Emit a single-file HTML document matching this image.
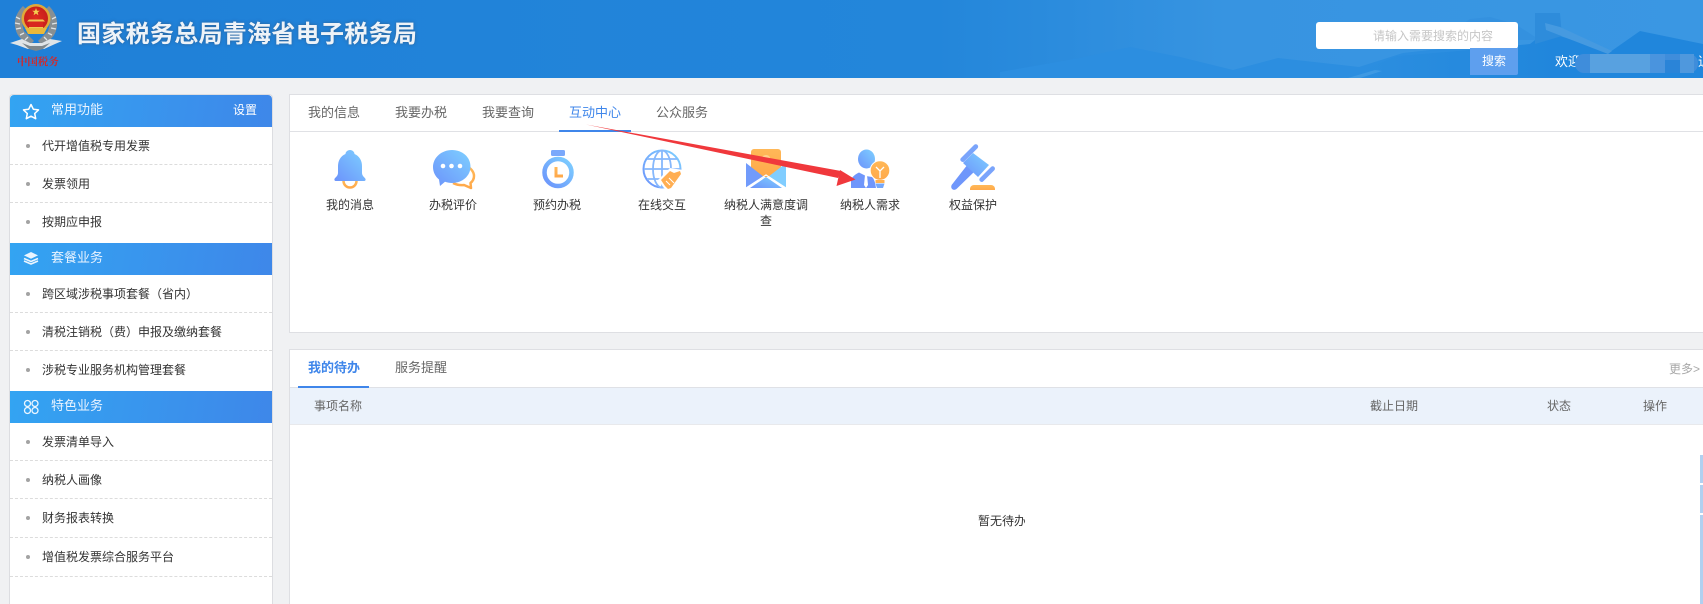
<!DOCTYPE html>
<html lang="zh-CN"><head><meta charset="utf-8"><title>国家税务总局青海省电子税务局</title>
<style>
*{box-sizing:border-box;margin:0;padding:0}
html,body{width:1703px;height:604px;overflow:hidden;background:#f0f1f3}
#root{position:relative;width:1703px;height:604px;overflow:hidden;background:#f0f1f3;font-family:"Liberation Sans","Noto Sans CJK SC",sans-serif;font-size:12px;color:#444;text-spacing-trim:space-all}
.a{position:absolute;white-space:nowrap}
#hd{position:absolute;left:0;top:0;width:1703px;height:78px;background:#1f80d8;overflow:hidden}
.t{line-height:18px;height:18px}
#side{position:absolute;left:9px;top:94px;width:264px;height:510px;background:#fff;border:1px solid #dcdde1;border-bottom:0;border-radius:4px 4px 0 0}
.sh{position:absolute;left:10px;width:262px;height:32px;background:linear-gradient(100deg,#33a4f2,#3e87e9);color:#eaf4ff;font-size:13px;line-height:30px;padding-left:41px}
.it{position:absolute;left:10px;width:262px;height:38px;line-height:38px;padding-left:32px;color:#333;border-bottom:1px dashed #dcdcdc}
.it:before{content:"";position:absolute;left:16px;top:17px;width:4px;height:4px;border-radius:50%;background:#a3a3a3}
.it.n{border-bottom:0}
.pn{position:absolute;left:289px;width:1414px;background:#fff;border:1px solid #dedfe3;border-right:0}
.tb{font-size:13px;color:#666;line-height:18px;height:18px}
.lb{width:90px;text-align:center;color:#333;line-height:16px;white-space:normal}
</style></head><body>
<div id="root">
<div id="hd">
<svg class="a" style="left:0;top:0" width="1703" height="78" viewBox="0 0 1703 78">
<defs><linearGradient id="h1" x1="0" x2="1703" y1="0" y2="0" gradientUnits="userSpaceOnUse"><stop offset="0" stop-color="#1f80d8"/><stop offset=".55" stop-color="#2386da"/><stop offset=".72" stop-color="#3794e1"/><stop offset="1" stop-color="#3a97e3"/></linearGradient>
<linearGradient id="h2" x1="1340" x2="1560" y1="0" y2="0" gradientUnits="userSpaceOnUse"><stop offset="0" stop-color="#2d8fe0"/><stop offset="1" stop-color="#2086dc"/></linearGradient>
<radialGradient id="em" cx=".5" cy=".5" r=".5"><stop offset="0" stop-color="#e02a20"/><stop offset="1" stop-color="#c8201c"/></radialGradient></defs>
<rect width="1703" height="78" fill="url(#h1)"/>
<path d="M1440 40L1470 19 1490 17 1515 24 1540 40Z" fill="#3491df"/>
<path d="M1000 78V72L1080 58 1130 47 1180 57 1233 70 1278 58 1314 62 1359 67 1403 53 1448 48 1540 46V78Z" fill="#2c8ee0"/>
<path d="M1340 78L1397 56 1470 50 1530 44 1535 40 1560 36 1610 52 1640 31 1703 44V78Z" fill="url(#h2)"/>
<path d="M1535 13H1560L1562 36 1535 44Z" fill="#2e8cdb"/>
<path d="M1545 23L1560 27 1612 51 1608 54 1546 30Z" fill="#469ae0"/>
<path d="M1348 78L1375 70 1382 71 1360 78Z" fill="#3f9ae3"/>
<!-- emblem -->
<g>
<path d="M15 26C14 17 19 10 23 6L26 9C22 15 21 23 24 31L34 41 31 44C21 41 16 35 15 26Z" fill="#878f93"/>
<path d="M57 26C58 17 53 10 49 6L46 9C50 15 51 23 48 31L38 41 41 44C51 41 56 35 57 26Z" fill="#878f93"/>
<path d="M16 17l4 2M15 23l5 1M16 29l5-1M20 35l4-2M25 40l3-3M56 17l-4 2M57 23l-5 1M56 29l-5-1M52 35l-4-2M47 40l-3-3" stroke="#dfe4e7" stroke-width="1.300"/>
<circle cx="36" cy="18.500" r="14.500" fill="#dfa93a"/>
<circle cx="36" cy="18.500" r="12" fill="url(#em)"/>
<path d="M25 28H47L44 34H28Z" fill="#e8b83c"/><path d="M29 22H43V28H29Z" fill="#d8281f"/><path d="M27 21.500H45L43 19.500H29Z" fill="#f0c850"/><path d="M29 27.500h14" stroke="#f0c850" stroke-width="1"/>
<path d="M36 8l1 2.700h2.800l-2.200 1.700.8 2.800-2.400-1.700-2.400 1.700.8-2.800-2.200-1.700H35z" fill="#f4d050"/>
<path d="M10 43L22 39 30 43H42L50 39 62 41 55 44 44 49H28L17 45Z" fill="#dfe4e7"/>
<path d="M22 43L30 46H42L50 43 43 49 36 51 29 49Z" fill="#7e868a"/>
</g>
</svg>
<div class="a" style="left:17px;top:53px;width:42px;font:bold 10.500px/17px 'Noto Serif CJK SC',serif;color:#cf2a2e;letter-spacing:-.1px">中国税务</div>
<div class="a" style="left:77px;top:17px;font-size:24px;font-weight:700;line-height:36px;letter-spacing:.3px;color:#eef3f8;text-shadow:0 0 3px rgba(60,70,90,.55)">国家税务总局青海省电子税务局</div>
<div class="a" style="left:1316px;top:22px;width:202px;height:27px;background:#fff;border-radius:3px"></div>
<div class="a t" style="left:1373px;top:27px;color:#c6c6c6">请输入需要搜索的内容</div>
<div class="a" style="left:1470px;top:48px;width:48px;height:27px;background:#5e9fee;color:#fff;line-height:27px;text-align:center;border-radius:0 0 2px 0">搜索</div>
<div class="a t" style="left:1555px;top:53px;color:#fff;font-size:13px">欢迎</div>
<div class="a t" style="left:1698px;top:53px;color:#fff;font-size:13px">退</div>
<div class="a" style="left:1575px;top:54px;width:123px;height:19px;background:#3f8ddb;border-radius:9px"></div>
<div class="a" style="left:1590px;top:54px;width:60px;height:19px;background:#58a1e0"></div>
<div class="a" style="left:1650px;top:54px;width:15px;height:19px;background:#4a94de"></div>
<div class="a" style="left:1665px;top:60px;width:15px;height:13px;background:#2a84d8"></div>
<div class="a" style="left:1680px;top:54px;width:14px;height:19px;background:#4f98dd"></div>
</div>

<div id="side"></div>
<div class="sh" style="top:95px;border-radius:4px 4px 0 0">常用功能<span class="a" style="left:223px;top:0;font-size:12px;color:#fff">设置</span></div>
<div class="it" style="top:127px">代开增值税专用发票</div>
<div class="it" style="top:165px">发票领用</div>
<div class="it n" style="top:203px;height:40px">按期应申报</div>
<div class="sh" style="top:243px">套餐业务</div>
<div class="it" style="top:275px">跨区域涉税事项套餐（省内）</div>
<div class="it" style="top:313px">清税注销税（费）申报及缴纳套餐</div>
<div class="it n" style="top:351px;height:40px">涉税专业服务机构管理套餐</div>
<div class="sh" style="top:391px">特色业务</div>
<div class="it" style="top:423px">发票清单导入</div>
<div class="it" style="top:461px">纳税人画像</div>
<div class="it" style="top:499px;height:39px">财务报表转换</div>
<div class="it" style="top:538px;height:39px">增值税发票综合服务平台</div>

<div class="pn" style="top:94px;height:239px"></div>
<div class="a" style="left:290px;top:131px;width:1413px;height:1px;background:#e0e1e5"></div>
<div class="a tb" style="left:308px;top:104px">我的信息</div>
<div class="a tb" style="left:395px;top:104px">我要办税</div>
<div class="a tb" style="left:482px;top:104px">我要查询</div>
<div class="a tb" style="left:569px;top:104px;color:#3f86ea">互动中心</div>
<div class="a tb" style="left:656px;top:104px">公众服务</div>
<div class="a" style="left:559px;top:130px;width:72px;height:2px;background:#3f86ea"></div>

<div class="a lb" style="left:305px;top:197px">我的消息</div>
<div class="a lb" style="left:408px;top:197px">办税评价</div>
<div class="a lb" style="left:512px;top:197px">预约办税</div>
<div class="a lb" style="left:617px;top:197px">在线交互</div>
<div class="a lb" style="left:721px;top:197px;width:90px">纳税人满意度调查</div>
<div class="a lb" style="left:825px;top:197px">纳税人需求</div>
<div class="a lb" style="left:928px;top:197px">权益保护</div>

<div class="pn" style="top:349px;height:260px"></div>
<div class="a tb" style="left:308px;top:359px;color:#3f86ea;font-weight:700">我的待办</div>
<div class="a tb" style="left:395px;top:359px">服务提醒</div>
<div class="a t" style="left:1669px;top:360px;color:#a8a8a8">更多&gt;</div>
<div class="a" style="left:290px;top:387px;width:1413px;height:38px;background:#ebf2fb;border-top:1px solid #dfe1e6;border-bottom:1px solid #e8e9ec"></div>
<div class="a" style="left:298px;top:386px;width:71px;height:2px;background:#3f86ea"></div>
<div class="a t" style="left:314px;top:397px;color:#666">事项名称</div>
<div class="a t" style="left:1370px;top:397px;color:#666">截止日期</div>
<div class="a t" style="left:1547px;top:397px;color:#666">状态</div>
<div class="a t" style="left:1643px;top:397px;color:#666">操作</div>
<div class="a t" style="left:978px;top:512px;color:#333;width:47px;overflow:hidden">暂无待办</div>
<div class="a" style="left:1700px;top:455px;width:3px;height:28px;background:#b0d0f0"></div>
<div class="a" style="left:1700px;top:485px;width:3px;height:28px;background:#b0d0f0"></div>
<div class="a" style="left:1700px;top:515px;width:3px;height:89px;background:#b0d0f0"></div>

<svg class="a" style="left:0;top:0;pointer-events:none" width="1703" height="604" viewBox="0 0 1703 604">
<defs>
<linearGradient id="b" x1="0" y1="1" x2="1" y2="0"><stop offset="0" stop-color="#6c93fb"/><stop offset="1" stop-color="#7ed0ff"/></linearGradient>
<linearGradient id="o" x1="0" y1="0" x2="0" y2="1"><stop offset="0" stop-color="#ffb858"/><stop offset="1" stop-color="#ffa94a"/></linearGradient>
</defs>
<!-- sidebar icons -->
<path d="M31 104.500l2.300 4.700 5.200.7-3.800 3.600 1 5.200-4.700-2.500-4.700 2.500 1-5.200-3.800-3.600 5.200-.7z" fill="none" stroke="#fff" stroke-width="1.500" stroke-linejoin="round"/>
<path d="M31 252l7 3.400-7 3.400-7-3.400z" fill="#eaf5ff"/><path d="M24 258.500l7 3 7-3M24 261l7 3 7-3" fill="none" stroke="#eaf5ff" stroke-width="1.600"/>
<g fill="none" stroke="#eaf5ff" stroke-width="1.300"><circle cx="27.500" cy="403.500" r="3"/><circle cx="35" cy="403.500" r="3"/><circle cx="27.500" cy="410.500" r="3"/><circle cx="35" cy="410.500" r="3"/></g>
<!-- bell -->
<path d="M343.500 181a6.500 6.500 0 0 0 13 0" fill="none" stroke="url(#o)" stroke-width="2.500"/>
<path d="M350 150c2.500 0 4.500 2 4.500 4c5 2 7.500 7 7.500 12v7c0 3 3 4.500 3.500 6c.4 1.200-.3 2-1.500 2h-28c-1.200 0-1.900-.8-1.500-2c.5-1.500 3.500-3 3.500-6v-7c0-5 2.500-10 7.500-12c0-2 2-4 4.500-4z" fill="url(#b)"/>
<!-- chat -->
<path d="M466 166c5 2 8 6 8 10 0 3-1 5-3.500 7l.5 5-7-3c-4 .5-8-.5-11-2" fill="none" stroke="url(#o)" stroke-width="2.500" stroke-linejoin="round"/>
<path d="M452 150c10.500 0 18.500 7.200 18.500 16.500S462.500 183 452 183c-2.500 0-5-.5-7-1.200l-5 4.200-1-6.500c-3.700-3-6-7.500-6-12.500 0-9.300 8.500-17 19-17z" fill="url(#b)"/>
<circle cx="443" cy="166" r="2.300" fill="#fff"/><circle cx="451.500" cy="166" r="2.300" fill="#fff"/><circle cx="460" cy="166" r="2.300" fill="#fff"/>
<!-- timer -->
<rect x="551" y="150" width="14" height="6" rx="1.500" fill="#7aa8fb"/>
<circle cx="558" cy="172.500" r="13.500" fill="none" stroke="url(#b)" stroke-width="4.500"/>
<path d="M556 167v9h7" fill="none" stroke="url(#o)" stroke-width="3"/>
<!-- globe -->
<g fill="none" stroke="#86b8fc" stroke-width="1.800">
<circle cx="662" cy="169" r="18.500" stroke="url(#b)" stroke-width="2"/>
<ellipse cx="662" cy="169" rx="9" ry="18.500"/><path d="M662 150.500v37M644 169h37M647 159h30M647 179h30"/>
</g>
<path d="M658 180l12-12 13 2-5 12-9 8-5-2z" fill="#fff"/>
<path d="M661 180l9-9 4 2 6-2 1 3-10 14-3 1-3-3z" fill="#ffae52"/>
<path d="M669 178l5 5M666 181l4 4" stroke="#fff" stroke-width="1"/>
<!-- envelope -->
<rect x="751" y="149" width="30" height="28" rx="3" fill="url(#o)"/>
<path d="M762 158a4 3 0 0 1 8 0l-4 4z" fill="#ffd08a"/>
<path d="M746 163l18 14-18 11z" fill="#719bfb"/>
<path d="M786 163l-18 14 18 11z" fill="#80cdff"/>
<path d="M750 188l16-11 16 11z" fill="url(#b)"/>
<path d="M746 188l20-13 20 13" fill="none" stroke="#fff" stroke-width="1.200"/>
<!-- person + bulb -->
<ellipse cx="866.500" cy="159" rx="8.500" ry="9.500" fill="url(#b)"/>
<path d="M851 188v-7c0-4 5-7 8-8.500l7 3.500 6 1c3 2 4 11 4 11z" fill="#6f96fb"/>
<path d="M865 175h2l1 10-2 3-2-3z" fill="#fff"/>
<circle cx="880" cy="170.500" r="9.800" fill="url(#o)" stroke="#fff" stroke-width="1"/>
<path d="M876 167l4 4 4-4M880 171v7" fill="none" stroke="#fff" stroke-width="1.300"/>
<rect x="875.500" y="180" width="9" height="3" fill="#ffb050"/>
<path d="M875.500 183.500h9l-1.500 4.500h-6z" fill="#75a8fb"/>
<!-- gavel -->
<path d="M968 164l7 7-18 17.500c-1.800 1.800-4 1.600-5 .4s-1.200-3.200.5-5z" fill="#6f96fb"/>
<path d="M973 153L989 165 978 177 963 163Z" fill="url(#b)"/>
<path d="M961 158l13-13c1-1 2.700-1 3.500 0 .9.900.9 2.300 0 3.200l-13 13c-1 1-2.400 1-3.400.1-1-1-1.100-2.300-.1-3.300z" fill="#7aa4fb"/>
<path d="M980 178l11-11c1-1 2.500-1 3.300 0 .9.900.9 2.300 0 3.200l-11 11c-1 1-2.300 1-3.200.1-1-1-1-2.300-.1-3.300z" fill="#7aa4fb"/>
<path d="M970 190v-1c0-2.500 2-4 4-4h17c2 0 4 1.500 4 4v1z" fill="url(#o)"/>
<!-- red arrow -->
<path d="M586 124.500L841 171L838 178Z" fill="#f0383c"/>
<path d="M840 170L855.500 179.500L836.500 186Z" fill="#f0383c"/>
</svg>
</div>
</body></html>
